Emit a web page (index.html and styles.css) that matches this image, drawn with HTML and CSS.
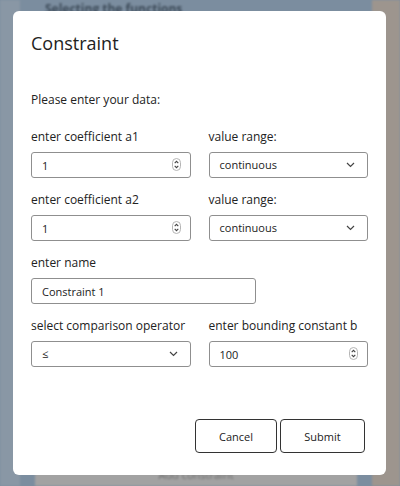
FILE: index.html
```html
<!DOCTYPE html>
<html lang="en">
<head>
<meta charset="utf-8">
<title>Constraint</title>
<link rel="stylesheet" href="styles.css">
</head>
<body>
<div class="page">
  <aside class="side-left"></aside>
  <main class="main">
    <div class="main-head">Selecting the functions</div>
    <div class="main-body"></div>
    <div class="main-foot"><div class="foot-panel">Add constraint</div></div>
  </main>
  <aside class="side-right"></aside>
</div>

<div class="dialog">
  <h1 class="title">Constraint</h1>
  <p class="intro">Please enter your data:</p>
  <form class="form">
    <div class="group">
      <label class="label">enter coefficient a1</label>
      <div class="field">
        <input class="input" type="text" value="1">
        <svg class="spin" width="9" height="13" viewBox="0 0 9 13"><rect x="0.5" y="0.5" width="8" height="12" rx="4" fill="none" stroke="#b5b5b5"/><path d="M2.7 5.2 L4.5 3.4 L6.3 5.2" fill="none" stroke="#444" stroke-width="1.1"/><path d="M2.7 7.8 L4.5 9.6 L6.3 7.8" fill="none" stroke="#444" stroke-width="1.1"/></svg>
      </div>
    </div>
    <div class="group">
      <label class="label">value range:</label>
      <div class="field">
        <div class="input select">continuous</div>
        <svg class="chev" width="9" height="6" viewBox="0 0 9 6"><path d="M1 1 L4.5 4.5 L8 1" fill="none" stroke="#444" stroke-width="1.2"/></svg>
      </div>
    </div>
    <div class="group">
      <label class="label">enter coefficient a2</label>
      <div class="field">
        <input class="input" type="text" value="1">
        <svg class="spin" width="9" height="13" viewBox="0 0 9 13"><rect x="0.5" y="0.5" width="8" height="12" rx="4" fill="none" stroke="#b5b5b5"/><path d="M2.7 5.2 L4.5 3.4 L6.3 5.2" fill="none" stroke="#444" stroke-width="1.1"/><path d="M2.7 7.8 L4.5 9.6 L6.3 7.8" fill="none" stroke="#444" stroke-width="1.1"/></svg>
      </div>
    </div>
    <div class="group">
      <label class="label">value range:</label>
      <div class="field">
        <div class="input select">continuous</div>
        <svg class="chev" width="9" height="6" viewBox="0 0 9 6"><path d="M1 1 L4.5 4.5 L8 1" fill="none" stroke="#444" stroke-width="1.2"/></svg>
      </div>
    </div>
    <div class="group wide">
      <label class="label">enter name</label>
      <div class="field name-field">
        <input class="input" type="text" value="Constraint 1">
      </div>
    </div>
    <div class="group">
      <label class="label">select comparison operator</label>
      <div class="field">
        <div class="input select">≤</div>
        <svg class="chev" width="9" height="6" viewBox="0 0 9 6"><path d="M1 1 L4.5 4.5 L8 1" fill="none" stroke="#444" stroke-width="1.2"/></svg>
      </div>
    </div>
    <div class="group">
      <label class="label">enter bounding constant b</label>
      <div class="field">
        <input class="input" type="text" value="100">
        <svg class="spin" width="9" height="13" viewBox="0 0 9 13"><rect x="0.5" y="0.5" width="8" height="12" rx="4" fill="none" stroke="#b5b5b5"/><path d="M2.7 5.2 L4.5 3.4 L6.3 5.2" fill="none" stroke="#444" stroke-width="1.1"/><path d="M2.7 7.8 L4.5 9.6 L6.3 7.8" fill="none" stroke="#444" stroke-width="1.1"/></svg>
      </div>
    </div>
  </form>
  <div class="footer">
    <button class="btn btn-cancel" type="button">Cancel</button>
    <button class="btn btn-submit" type="button">Submit</button>
  </div>
</div>
</body>
</html>
```

FILE: styles.css
```css
html, body {
  margin: 0;
  padding: 0;
}
body {
  width: 400px;
  height: 486px;
  overflow: hidden;
  position: relative;
  font-family: "Open Sans", "Noto Sans", sans-serif;
  background: #7b8d9f;
}

.page {
  display: flex;
  height: 486px;
  filter: blur(1px);
}
.side-left {
  width: 20px;
  background: #8997a5;
}
.main {
  flex: 1;
  display: flex;
  flex-direction: column;
  background: #7b8d9f;
}
.main-head {
  padding: 2px 0 0 25px;
  font-size: 12px;
  font-weight: 700;
  color: #3d4b59;
  line-height: 14px;
}
.main-body {
  flex: 1;
}
.main-foot {
  height: 18px;
  padding: 0 15px;
}
.foot-panel {
  height: 100%;
  background: #a2a2a2;
  color: #6e6e6e;
  font-size: 11px;
  line-height: 14px;
  text-align: center;
}
.side-right {
  width: 28px;
  background: #9d958e;
}

.dialog {
  position: absolute;
  left: 13px;
  top: 11px;
  width: 373px;
  box-sizing: border-box;
  padding: 18px 18px 22px 18px;
  background: #fff;
  border-radius: 6px;
  color: #222;
}
.title {
  margin: 0;
  font-size: 18px;
  font-weight: 400;
  line-height: 28px;
}
.intro {
  margin: 34px 0 0 0;
  font-size: 12px;
  line-height: 18px;
}
.form {
  margin: 19px 0 0 0;
  display: grid;
  grid-template-columns: 1fr 1fr;
  column-gap: 18px;
  row-gap: 13px;
}
.group {
  display: flex;
  flex-direction: column;
  gap: 6px;
}
.wide {
  grid-column: 1 / -1;
}
.label {
  font-size: 12px;
  line-height: 18px;
  white-space: nowrap;
}
.field {
  position: relative;
}
.name-field {
  width: 225px;
}
.input {
  display: block;
  width: 100%;
  height: 26px;
  box-sizing: border-box;
  margin: 0;
  border: 1px solid #8f8f8f;
  border-radius: 3px;
  padding: 0 10px;
  font-family: "Open Sans", "Noto Sans", sans-serif;
  font-size: 11px;
  line-height: 24px;
  color: #222;
  background: #fff;
  outline: none;
}
.spin {
  position: absolute;
  right: 10px;
  top: 6px;
}
.chev {
  position: absolute;
  right: 13px;
  top: 10px;
}
.footer {
  margin-top: 52px;
  display: flex;
  justify-content: flex-end;
  gap: 3px;
  padding-right: 3px;
}
.btn {
  height: 34px;
  box-sizing: border-box;
  border: 1px solid #333;
  border-radius: 4px;
  background: #fff;
  font-family: "Open Sans", "Noto Sans", sans-serif;
  font-size: 11px;
  color: #222;
  padding: 0;
}
.btn-cancel {
  width: 82px;
}
.btn-submit {
  width: 85px;
}
```
